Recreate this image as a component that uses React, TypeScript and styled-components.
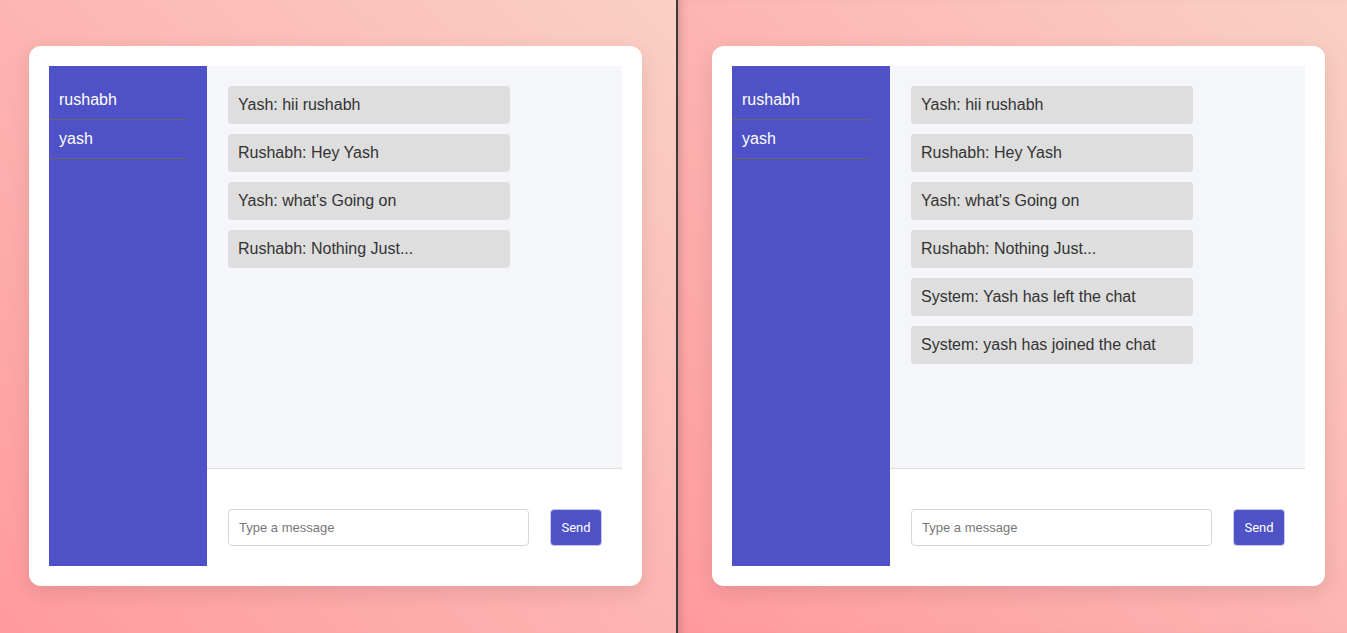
import styled, { createGlobalStyle } from 'styled-components';

const GlobalStyle = createGlobalStyle`
  html, body {
    margin: 0;
    padding: 0;
    height: 100%;
    overflow: hidden;
  }
  body {
    font-family: 'Liberation Sans', Arial, sans-serif;
  }
`;

const USERS = ['rushabh', 'yash'];

const LEFT_MESSAGES = [
  'Yash: hii rushabh',
  'Rushabh: Hey Yash',
  "Yash: what's Going on",
  'Rushabh: Nothing Just...',
];

const RIGHT_MESSAGES = [
  ...LEFT_MESSAGES,
  'System: Yash has left the chat',
  'System: yash has joined the chat',
];

type ChatProps = { messages: string[] };

const ChatWindow = ({ messages }: ChatProps) => (
  <Card>
    <Sidebar>
      {USERS.map(u => (
        <UserItem key={u}>{u}</UserItem>
      ))}
    </Sidebar>
    <Main>
      <MessageList>
        {messages.map((m, i) => (
          <Message key={i}>{m}</Message>
        ))}
      </MessageList>
      <InputBar>
        <Input placeholder="Type a message" />
        <SendButton>Send</SendButton>
      </InputBar>
    </Main>
  </Card>
);

const App = () => (
  <>
    <GlobalStyle />
    <Screen>
      <Pane $side="left">
        <ChatWindow messages={LEFT_MESSAGES} />
      </Pane>
      <Divider />
      <Pane $side="right">
        <ChatWindow messages={RIGHT_MESSAGES} />
      </Pane>
    </Screen>
  </>
);

export default App;

const Screen = styled.div`
  display: grid;
  grid-template-columns: 676px 2px 1fr;
  width: 1347px;
  height: 633px;
`;

const Pane = styled.div<{ $side: 'left' | 'right' }>`
  background: linear-gradient(to top right, #ff9a9e 0%, #fad0c4 100%);
  padding: ${p => (p.$side === 'left' ? '46px 0 0 29px' : '46px 0 0 34px')};
  box-shadow: ${p => (p.$side === 'right' ? 'inset 8px 0 10px -6px rgba(0, 0, 0, 0.18)' : 'none')};
  overflow: hidden;
`;

const Divider = styled.div`
  background: #3a3a3e;
`;

const Card = styled.div`
  display: flex;
  width: 613px;
  height: 540px;
  box-sizing: border-box;
  padding: 20px;
  background: #fff;
  border-radius: 12px;
  box-shadow: 0 6px 20px rgba(0, 0, 0, 0.1);
`;

const Sidebar = styled.ul`
  list-style: none;
  margin: 0;
  width: 158px;
  flex-shrink: 0;
  box-sizing: border-box;
  padding: 15px 20px 0 0;
  background: #4e52c6;
`;

const UserItem = styled.li`
  padding: 10px;
  font-size: 16px;
  line-height: 18px;
  color: #fff;
  border-bottom: 1px solid #666;
`;

const Main = styled.div`
  flex: 1;
  display: flex;
  flex-direction: column;
  min-width: 0;
`;

const MessageList = styled.div`
  flex: 1;
  display: flex;
  flex-direction: column;
  gap: 10px;
  padding: 20px 20px 20px 21px;
  background: #f5f6fa;
  border-bottom: 1px solid #ddd;
`;

const Message = styled.div`
  width: 282px;
  box-sizing: border-box;
  padding: 10px;
  font-size: 16px;
  line-height: 18px;
  color: #333;
  background: #dedede;
  border-radius: 4px;
`;

const InputBar = styled.div`
  display: flex;
  align-items: center;
  gap: 21px;
  height: 97px;
  box-sizing: border-box;
  padding: 40px 20px 20px 21px;
`;

const Input = styled.input`
  flex: 1;
  height: 37px;
  box-sizing: border-box;
  padding: 0 10px;
  font-family: 'Liberation Sans', Arial, sans-serif;
  font-size: 13px;
  color: #333;
  border: 1px solid #d6d6d6;
  border-radius: 4px;
  outline: none;

  &::placeholder {
    color: #777;
  }
`;

const SendButton = styled.button`
  width: 52px;
  height: 37px;
  padding: 0;
  font-family: Roboto, 'Liberation Sans', sans-serif;
  font-size: 13px;
  color: #fff;
  background: #4e52c6;
  border: 1px solid #c8c9e8;
  border-radius: 4px;
  cursor: pointer;
`;
